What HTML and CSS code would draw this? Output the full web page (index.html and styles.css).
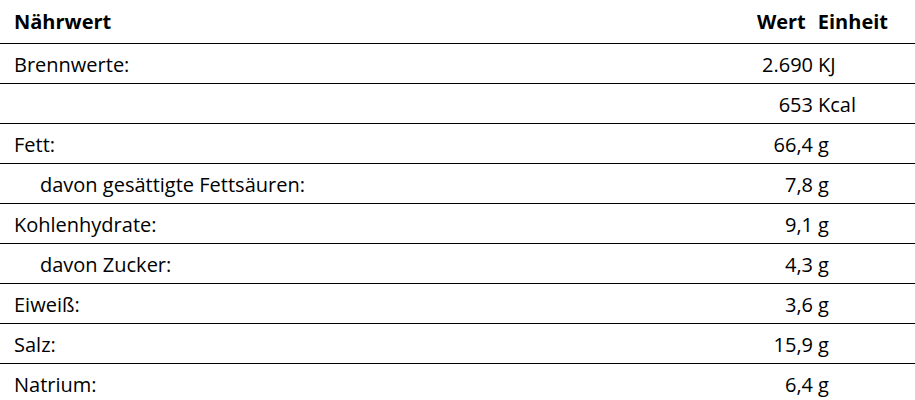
FILE: index.html
```html
<!DOCTYPE html>
<html lang="de">
<head>
<meta charset="utf-8">
<title>Nährwerte</title>
<link rel="stylesheet" href="styles.css">
</head>
<body>
<table class="nutrition">
  <colgroup>
    <col class="col-label">
    <col class="col-num">
    <col class="col-unit">
  </colgroup>
  <thead>
    <tr class="head">
      <th class="label">Nährwert</th>
      <th class="head-values" colspan="2"><span class="head-wert">Wert</span><span>Einheit</span></th>
    </tr>
  </thead>
  <tbody>
    <tr><td class="label">Brennwerte:</td><td class="num">2.690</td><td class="unit">KJ</td></tr>
    <tr><td class="label"></td><td class="num">653</td><td class="unit">Kcal</td></tr>
    <tr><td class="label">Fett:</td><td class="num">66,4</td><td class="unit">g</td></tr>
    <tr><td class="label sub">davon gesättigte Fettsäuren:</td><td class="num">7,8</td><td class="unit">g</td></tr>
    <tr><td class="label">Kohlenhydrate:</td><td class="num">9,1</td><td class="unit">g</td></tr>
    <tr><td class="label sub">davon Zucker:</td><td class="num">4,3</td><td class="unit">g</td></tr>
    <tr><td class="label">Eiweiß:</td><td class="num">3,6</td><td class="unit">g</td></tr>
    <tr><td class="label">Salz:</td><td class="num">15,9</td><td class="unit">g</td></tr>
    <tr><td class="label">Natrium:</td><td class="num">6,4</td><td class="unit">g</td></tr>
  </tbody>
</table>
</body>
</html>
```
FILE: styles.css
```css
html, body {
  margin: 0;
  padding: 0;
  background: #fff;
}
body {
  font-family: "Open Sans", Lato, sans-serif;
  color: #000;
  font-size: 20px;
}
.nutrition {
  width: 915px;
  border-collapse: collapse;
  table-layout: fixed;
}
.col-num {
  width: 100px;
}
.col-unit {
  width: 102px;
}
.nutrition th, .nutrition td {
  padding: 0;
  white-space: nowrap;
  line-height: 24px;
}
.nutrition tr {
  border-bottom: 1px solid #000;
}
.nutrition tbody tr:last-child {
  border-bottom: none;
}
.head th {
  height: 42px;
  padding-top: 1px;
  font-weight: 700;
  vertical-align: middle;
}
.nutrition td {
  height: 37px;
  padding-top: 2px;
  vertical-align: middle;
}
.nutrition .label {
  text-align: left;
  padding-left: 14px;
}
.nutrition .label.sub {
  padding-left: 40px;
}
.nutrition .num {
  text-align: right;
}
.nutrition .unit {
  text-align: left;
  padding-left: 5px;
}
.nutrition .head-values {
  text-align: right;
  padding-right: 27px;
}
.head-wert {
  margin-right: 12px;
}
```
